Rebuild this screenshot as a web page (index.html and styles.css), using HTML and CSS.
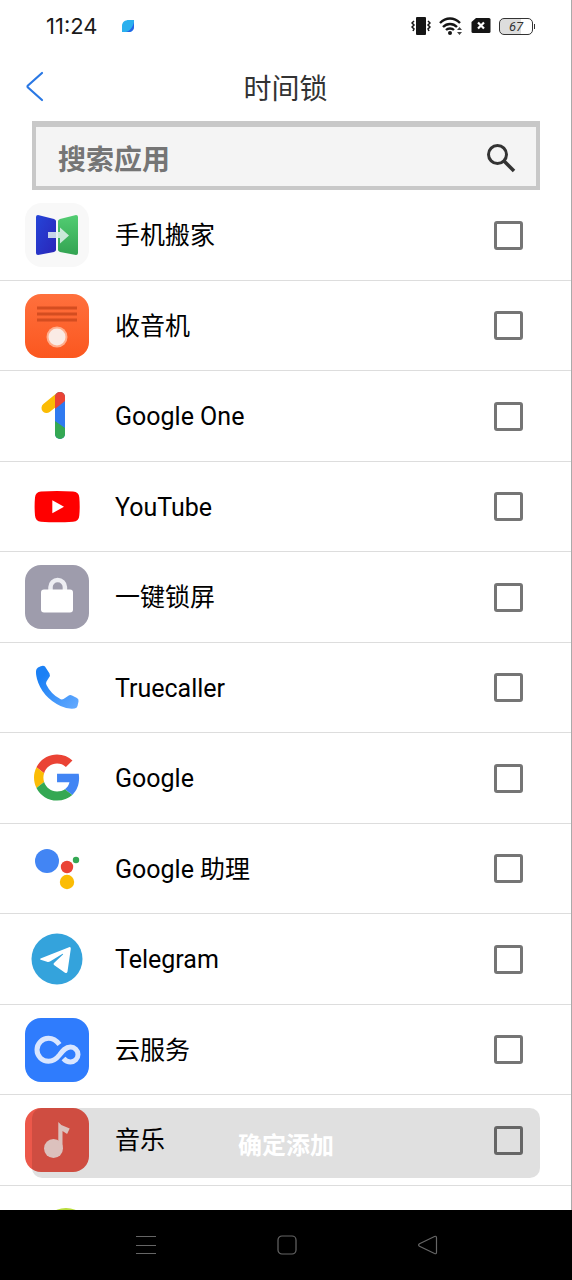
FILE: index.html
```html
<!DOCTYPE html>
<html lang="zh-CN">
<head>
<meta charset="UTF-8">
<meta name="viewport" content="width=device-width, initial-scale=1.0">
<title>时间锁</title>
<link rel="stylesheet" href="styles.css">
</head>
<body>

<div class="screen">
  <div class="status">
    <span class="time">11:24</span>
    <svg class="leaf" width="16" height="16" viewBox="0 0 16 16">
      <path d="M2 14V8c0-4 3-6 7-6h5v6c0 4-2 6-6 6z" fill="#2bb0ee"/>
      <path d="M14 4v4c0 4-2 6-6 6H6c4-1 7-5 8-10z" fill="#2563e6"/>
    </svg>
    <div class="status-icons">
      <svg width="20" height="20" viewBox="0 0 20 20">
        <rect x="5" y="1" width="10" height="18" rx="1" fill="#151515"/>
        <path d="M3 5L1 7l2 2-2 2 2 2-1 2M17 5l2 2-2 2 2 2-2 2 1 2" fill="none" stroke="#151515" stroke-width="1.5"/>
      </svg>
      <svg width="24" height="20" viewBox="0 0 24 20">
        <path d="M1 7c6-6 14-6 20 0M4 11c4-4 10-4 14 0M7 14c2-2 6-2 8 0" fill="none" stroke="#151515" stroke-width="2.4"/>
        <circle cx="11" cy="17" r="2" fill="#151515"/>
        <path d="M18 14l2.500-3 2.500 3zM18 16h5l-2.500 3z" fill="#444"/>
      </svg>
      <svg width="20" height="20" viewBox="0 0 20 20">
        <path d="M5 2h13q1.500 0 1.500 1.500v12q0 1.500-1.500 1.500H2Q.5 17 .5 15.500V6z" fill="#151515"/>
        <path d="M7 6.500l6 6M13 6.500l-6 6" stroke="#fff" stroke-width="2.200"/>
      </svg>
      <div class="battery">67</div>
    </div>
  </div>

  <header class="title-bar">
    <button class="back" aria-label="返回">
      <svg width="20" height="32" viewBox="0 0 20 32">
        <path d="M17 2L3 14.500q-1 1 0 2L17 29" fill="none" stroke="#2a78e4" stroke-width="2.200" stroke-linecap="round"/>
      </svg>
    </button>
    <h1>时间锁</h1>
  </header>

  <div class="search">
    <input type="text" placeholder="搜索应用" aria-label="搜索应用">
    <button class="search-btn" aria-label="搜索">
      <svg width="30" height="30" viewBox="0 0 30 30">
        <circle cx="11.500" cy="11.500" r="9" fill="none" stroke="#333" stroke-width="3"/>
        <path d="M18 18l10 10" stroke="#333" stroke-width="3.500"/>
      </svg>
    </button>
  </div>

  <main class="list">
    <label class="app">
      <svg class="icon" viewBox="0 0 64 64">
        <defs>
          <linearGradient id="door" x1="0" y1="0" x2="1" y2="1"><stop offset="0" stop-color="#2545d8"/><stop offset="1" stop-color="#2a25b8"/></linearGradient>
          <linearGradient id="door2" x1="0" y1="0" x2="0" y2="1"><stop offset="0" stop-color="#52cd72"/><stop offset="1" stop-color="#33a352"/></linearGradient>
        </defs>
        <rect width="64" height="64" rx="17" fill="#f8f8f8"/>
        <path d="M13 12l16 4q2 1 2 2v29q0 1-2 2l-16 3q-2 0-2-2V14q0-2 2-2z" fill="url(#door)"/>
        <path d="M51 12l-16 4q-2 1-2 2v29q0 1 2 2l16 3q2 0 2-2V14q0-2-2-2z" fill="url(#door2)"/>
        <path d="M23 29h12v-4.500l9 8-9 8V35H23z" fill="#e2f1ee" opacity=".85"/>
      </svg>
      <span class="name">手机搬家</span>
      <input type="checkbox">
    </label>
    <label class="app">
      <svg class="icon" viewBox="0 0 64 64">
        <defs><linearGradient id="radio" x1="0" y1="0" x2="0" y2="1"><stop offset="0" stop-color="#ff703d"/><stop offset="1" stop-color="#fb571f"/></linearGradient></defs>
        <rect width="64" height="64" rx="16" fill="url(#radio)"/>
        <path d="M12 14h40M12 20h40M12 26h40" stroke="#d44d20" stroke-width="3"/>
        <circle cx="32" cy="43" r="10.500" fill="#ffae8d"/>
        <circle cx="32" cy="43" r="8.500" fill="#faebe5"/>
      </svg>
      <span class="name">收音机</span>
      <input type="checkbox">
    </label>
    <label class="app">
      <svg class="icon" viewBox="0 0 64 64">
        <defs><clipPath id="stem"><rect x="30" y="8" width="10" height="47" rx="5"/></clipPath></defs>
        <path d="M21.500 24L35 13" stroke="#fbbc04" stroke-width="10" stroke-linecap="round"/>
        <g clip-path="url(#stem)">
          <path d="M30 8h10v47H30z" fill="#2f7af0"/>
          <path d="M30 8h10v9l-10 8z" fill="#ea4335"/>
          <path d="M30 37l10 7v11H30z" fill="#34a853"/>
        </g>
      </svg>
      <span class="name">Google One</span>
      <input type="checkbox">
    </label>
    <label class="app">
      <svg class="icon" viewBox="0 0 64 64">
        <path d="M16 16.500q16-1 32 0 6 .5 6.300 6 .8 9 0 18-.3 6-6.300 6.300-16 1-32 0-5.500-.3-6-6.300-.8-9 0-18 .5-5.500 6-6z" fill="#f00"/>
        <path d="M27.300 25.300v13L39 31.800z" fill="#fff"/>
      </svg>
      <span class="name">YouTube</span>
      <input type="checkbox">
    </label>
    <label class="app">
      <svg class="icon" viewBox="0 0 64 64">
        <rect width="64" height="64" rx="16" fill="#9e9cac"/>
        <path d="M25.500 26v-4a7.200 7 0 0 1 14.400 0v4" fill="none" stroke="#eeeef3" stroke-width="4.500"/>
        <rect x="16" y="24.500" width="32" height="23" rx="3" fill="#fff"/>
      </svg>
      <span class="name">一键锁屏</span>
      <input type="checkbox">
    </label>
    <label class="app">
      <svg class="icon" viewBox="0 0 64 64">
        <defs><linearGradient id="phone" x1="0" y1="0" x2="1" y2="1"><stop offset=".2" stop-color="#1b80f5"/><stop offset="1" stop-color="#66abff"/></linearGradient></defs>
        <path d="M13 11.500q5-3 7-1l4.500 7q1 2-.5 4l-2.500 4q-1 1.500 0 3.500 4.500 9 13 13.500 2 1.500 4 .5l4.500-3q2-1.500 4-.5l5 2.500q2 1 1.500 3.500l-1 4.500q-.5 2-3 2.500-7 .8-14-2.500Q17 41 12 23q-1.500-6-.8-9 .3-1.500 1.800-2.500z" fill="url(#phone)"/>
      </svg>
      <span class="name">Truecaller</span>
      <input type="checkbox">
    </label>
    <label class="app">
      <svg class="icon" viewBox="0 0 64 64">
        <g transform="translate(9 8.500) scale(.96)">
          <path fill="#ea4335" d="M24 9.500c3.540 0 6.710 1.220 9.210 3.600l6.850-6.850C35.900 2.380 30.470 0 24 0 14.620 0 6.510 5.380 2.560 13.220l7.980 6.190C12.430 13.720 17.740 9.500 24 9.500z"/>
          <path fill="#4285f4" d="M46.980 24.550c0-1.570-.15-3.090-.38-4.550H24v9.020h12.940c-.58 2.960-2.260 5.480-4.780 7.180l7.730 6c4.510-4.180 7.090-10.360 7.090-17.650z"/>
          <path fill="#fbbc05" d="M10.530 28.590c-.48-1.450-.76-2.990-.76-4.590s.27-3.140.76-4.590l-7.980-6.190C.92 16.460 0 20.120 0 24c0 3.880.92 7.540 2.560 10.780l7.970-6.190z"/>
          <path fill="#34a853" d="M24 48c6.480 0 11.930-2.130 15.890-5.810l-7.730-6c-2.150 1.450-4.920 2.300-8.160 2.300-6.260 0-11.570-4.220-13.470-9.910l-7.980 6.190C6.510 42.620 14.620 48 24 48z"/>
        </g>
      </svg>
      <span class="name">Google</span>
      <input type="checkbox">
    </label>
    <label class="app">
      <svg class="icon" viewBox="0 0 64 64">
        <circle cx="22" cy="24" r="12" fill="#4285f4"/>
        <circle cx="42" cy="30" r="6.200" fill="#ea4335"/>
        <circle cx="51" cy="23" r="3.200" fill="#34a853"/>
        <circle cx="42" cy="45" r="7.200" fill="#fbbc04"/>
      </svg>
      <span class="name">Google 助理</span>
      <input type="checkbox">
    </label>
    <label class="app">
      <svg class="icon" viewBox="0 0 64 64">
        <circle cx="32" cy="32" r="25.500" fill="#34a3dc"/>
        <path d="M15.500 31.500L44 20.200q2-.6 1.800 1.500L42.500 44.500q-.5 2.200-2.500 1.200L29 38q-1-1 0-2l9-8.500q.5-1-.8-.5L25 34.500q-1.500.8-3 .3l-6.300-2q-1.200-.6-.2-1.300z" fill="#fff"/>
      </svg>
      <span class="name">Telegram</span>
      <input type="checkbox">
    </label>
    <label class="app">
      <svg class="icon" viewBox="0 0 64 64">
        <rect width="64" height="64" rx="16" fill="#2f7cfd"/>
        <path d="M34.500 26.500C31 22 27 20.300 23.500 20.300a11.500 11.500 0 0 0 0 23c5 0 8-2.500 11-6.300 3-4 6-8 11-8a7.500 7.500 0 0 1 0 15q-4 0-7-3.500" fill="none" stroke="#d9e6ff" stroke-width="5"/>
      </svg>
      <span class="name">云服务</span>
      <input type="checkbox">
    </label>
    <label class="app">
      <svg class="icon" viewBox="0 0 64 64">
        <rect width="64" height="64" rx="16" fill="#ec584a"/>
        <circle cx="28.500" cy="40.500" r="9.500" fill="#fbdcd8"/>
        <path d="M33.300 14l3 3 8.400 3.500-2.600 5.500-4.600-3V41h-4.200z" fill="#fbdcd8"/>
      </svg>
      <span class="name">音乐</span>
      <input type="checkbox">
    </label>
    <div class="app">
      <svg class="icon" viewBox="0 0 64 64">
        <ellipse cx="41" cy="33" rx="24" ry="24" fill="#b9dc3c"/>
      </svg>
    </div>
  </main>

  <button class="confirm">确定添加</button>
</div>

<nav class="nav">
  <button aria-label="菜单">
    <svg width="24" height="24" viewBox="0 0 24 24"><path d="M2 3.500h20M2 12.500h20M2 20.500h20"/></svg>
  </button>
  <button aria-label="主页">
    <svg width="24" height="24" viewBox="0 0 24 24"><rect x="3" y="3" width="18" height="18" rx="4"/></svg>
  </button>
  <button aria-label="后退">
    <svg width="24" height="24" viewBox="0 0 24 24"><path d="M3.500 10.800L18.500 3.500q2-.8 2 1.300v14.400q0 2.100-2 1.300L3.500 13.200q-1.800-1.200 0-2.400z"/></svg>
  </button>
</nav>

</body>
</html>
```

FILE: styles.css
```css
* {
  box-sizing: border-box;
}
body {
  margin: 0;
  height: 100vh;
  display: flex;
  flex-direction: column;
  background: #fff;
  color: #000;
  font-family: Roboto, "Noto Sans CJK SC", sans-serif;
}
button {
  padding: 0;
  border: none;
  background: none;
  font-family: inherit;
  cursor: pointer;
}
svg {
  display: block;
}
.screen {
  position: relative;
  flex: 1;
  min-height: 0;
  display: flex;
  flex-direction: column;
  border-right: 1px solid #aaa;
}

/* status bar */
.status {
  display: flex;
  align-items: center;
  height: 52px;
  padding: 0 38px 0 46px;
}
.time {
  font-family: Inter, sans-serif;
  font-size: 22px;
  color: #1a1a1a;
}
.leaf {
  margin-left: 22px;
}
.status-icons {
  margin-left: auto;
  display: flex;
  align-items: center;
  gap: 8px;
}
.battery {
  position: relative;
  width: 34px;
  height: 17px;
  border: 1px solid #333;
  border-radius: 5px;
  background: linear-gradient(to right, #ddd 67%, #fff 67%);
  font-size: 13px;
  font-style: italic;
  line-height: 16px;
  text-align: center;
  color: #333;
}
.battery::after {
  content: "";
  position: absolute;
  right: -3px;
  top: 5px;
  width: 1px;
  height: 5px;
  background: #333;
}

/* title */
.title-bar {
  display: grid;
  grid-template-columns: 48px 1fr 48px;
  align-items: center;
  height: 69px;
}
.back {
  padding-left: 25px;
}
.title-bar h1 {
  margin: 0;
  font-size: 28px;
  font-weight: 400;
  text-align: center;
  color: #333;
}

/* search */
.search {
  display: flex;
  align-items: center;
  height: 69px;
  margin: 0 31px 0 32px;
  padding: 3px 20px 0 22px;
  border: 4px solid #c8c8c8;
  border-top-width: 6px;
  background: #f4f4f4;
}
.search input {
  flex: 1;
  min-width: 0;
  padding: 0;
  border: none;
  outline: none;
  background: none;
  font-family: "Noto Sans CJK SC", sans-serif;
  font-size: 28px;
  font-weight: 700;
}
.search input::placeholder {
  color: #757575;
}

/* app list */
.list {
  flex: 1;
  min-height: 0;
  overflow: hidden;
}
.app {
  display: flex;
  align-items: center;
  height: 91px;
  padding: 0 48px 0 25px;
  border-bottom: 1px solid #ddd;
}
.app:nth-child(even) {
  height: 90px;
}
.icon {
  flex: none;
  width: 64px;
  height: 64px;
}
.name {
  flex: 1;
  margin-left: 26px;
  padding-top: 2px;
  font-size: 25px;
  line-height: 30px;
}
.app input {
  appearance: none;
  width: 29px;
  height: 29px;
  margin: 0;
  border: 3px solid #757575;
  border-radius: 3px;
}
.app input:checked {
  background: #2a78e4;
}

/* floats over the list */
.confirm {
  position: absolute;
  left: 32px;
  right: 31px;
  bottom: 32px;
  height: 70px;
  border-radius: 10px;
  background: rgba(0, 0, 0, 0.12);
  color: #fff;
  font-size: 24px;
  font-weight: 700;
}

/* system navigation */
.nav {
  display: flex;
  justify-content: center;
  align-items: center;
  gap: 117px;
  height: 70px;
  padding-left: 2px;
  background: #000;
}
.nav svg {
  fill: none;
  stroke: #666;
  stroke-width: 1.2;
}
```
